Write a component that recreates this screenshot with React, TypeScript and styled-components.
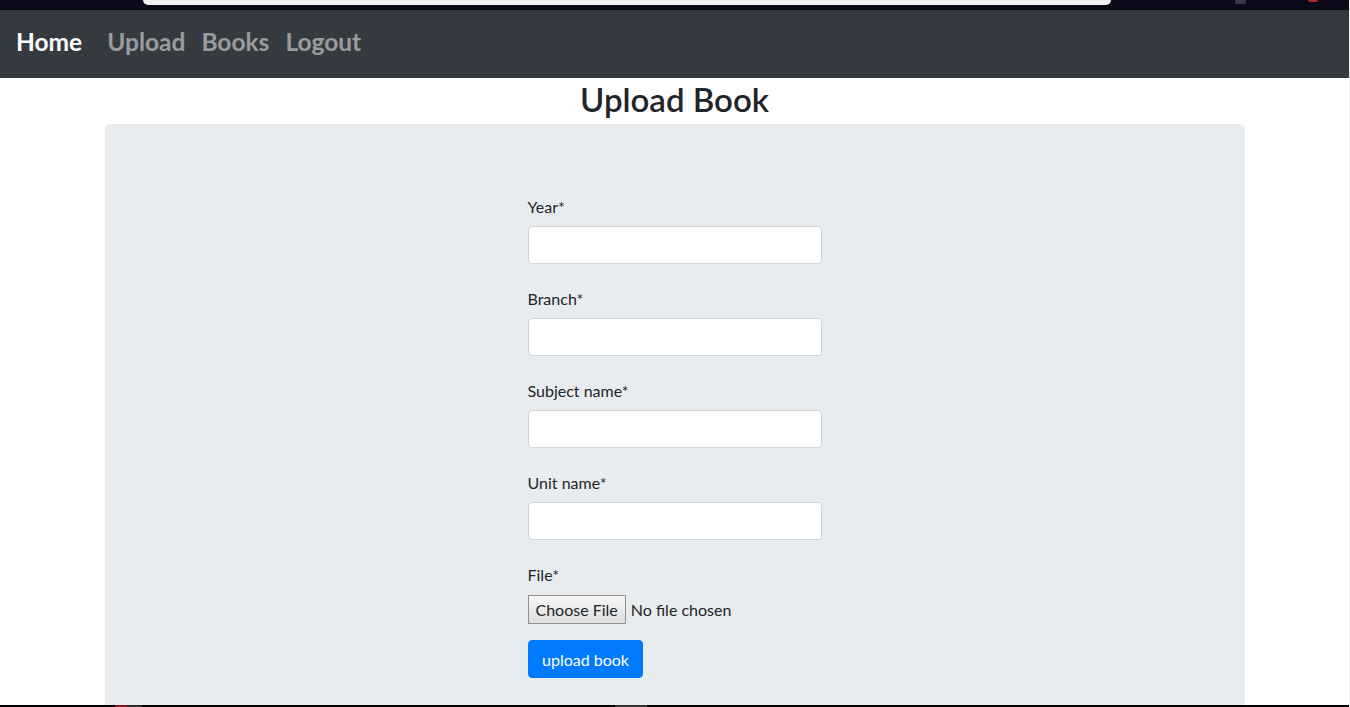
import React from "react";
import styled, { createGlobalStyle } from "styled-components";

const Global = createGlobalStyle`
  html, body { margin: 0; padding: 0; background: #fff; }
  body {
    font-family: "Segoe UI", Lato, "Open Sans", sans-serif;
    color: #212529;
    overflow: hidden;
  }
  * { box-sizing: border-box; }
`;

const Page = styled.div`
  width: 1350px;
  height: 707px;
  display: flex;
  flex-direction: column;
  border-right: 1px solid #ececec;
  overflow: hidden;
`;

const ChromeStrip = styled.div`
  height: 10px;
  flex: none;
  background: #0b0a1a;
  display: flex;
  align-items: flex-start;
`;

const AddressBar = styled.div`
  margin-left: 143px;
  width: 968px;
  height: 5px;
  background: #f1f2f4;
  border-radius: 0 0 9px 9px;
`;

const ChromeDot = styled.span<{ $color: string; $ml: number; $w: number; $h: number }>`
  margin-left: ${(p) => p.$ml}px;
  width: ${(p) => p.$w}px;
  height: ${(p) => p.$h}px;
  background: ${(p) => p.$color};
  border-radius: 0 0 2px 2px;
`;

const Navbar = styled.nav`
  height: 68px;
  flex: none;
  background: #343a40;
  display: flex;
  align-items: center;
  padding: 0 16px 6px;
`;

const Brand = styled.a`
  font-size: 24.5px;
  font-weight: 700;
  color: #fff;
  text-decoration: none;
  margin-right: 17px;
`;

const NavLink = styled.a`
  font-size: 24.5px;
  font-weight: 700;
  color: rgba(255, 255, 255, 0.5);
  text-decoration: none;
  padding: 0 8px;
`;

const Main = styled.main`
  flex: 1;
  display: flex;
  flex-direction: column;
  align-items: center;
`;

const Title = styled.h2`
  margin: 0;
  height: 46px;
  font-size: 33px;
  font-weight: 600;
  line-height: 43px;
  color: #212529;
`;

const Jumbotron = styled.section`
  width: 1140px;
  flex: 1;
  background: #e9ecef;
  border-radius: 5px 5px 0 0;
  display: flex;
  justify-content: center;
  padding-top: 70px;
`;

const Form = styled.form`
  width: 294px;
  display: flex;
  flex-direction: column;
`;

const Group = styled.div`
  display: flex;
  flex-direction: column;
  margin-bottom: 22px;
`;

const Label = styled.label`
  font-size: 16px;
  line-height: 24px;
  padding-top: 1px;
  margin-bottom: 7px;
`;

const Input = styled.input`
  height: 38px;
  width: 100%;
  border: 1px solid #ced4da;
  border-radius: 4px;
  background: #fff;
  padding: 6px 12px;
  font: inherit;
  font-size: 16px;
`;

const FileRow = styled.div`
  display: flex;
  align-items: center;
  height: 30px;
  gap: 5px;
  margin-bottom: 16px;
`;

const FileButton = styled.button`
  height: 29px;
  padding: 0 7px;
  font-family: inherit;
  font-size: 16px;
  color: #212529;
  border: 1px solid #8f8f8f;
  border-radius: 0;
  background: linear-gradient(#f6f6f6, #dedede);
`;

const FileText = styled.span`
  font-size: 16px;
`;

const Submit = styled.button`
  align-self: flex-start;
  height: 38px;
  padding: 0 13.5px;
  font-family: inherit;
  font-size: 16px;
  color: #fff;
  background: #007bff;
  border: 1px solid #007bff;
  border-radius: 4px;
`;

const BottomStrip = styled.div`
  height: 2px;
  flex: none;
  background: #000;
  display: flex;
`;

const BottomBit = styled.span<{ $color: string; $ml: number; $w: number }>`
  margin-left: ${(p) => p.$ml}px;
  width: ${(p) => p.$w}px;
  background: ${(p) => p.$color};
`;

const fields = ["Year*", "Branch*", "Subject name*", "Unit name*"];

export default function App() {
  return (
    <>
      <Global />
      <Page>
        <ChromeStrip>
          <AddressBar />
          <ChromeDot $color="#3a3a44" $ml={124} $w={11} $h={4} />
          <ChromeDot $color="#b0282a" $ml={62} $w={10} $h={2} />
        </ChromeStrip>
        <Navbar>
          <Brand href="#">Home</Brand>
          <NavLink href="#">Upload</NavLink>
          <NavLink href="#">Books</NavLink>
          <NavLink href="#">Logout</NavLink>
        </Navbar>
        <Main>
          <Title>Upload Book</Title>
          <Jumbotron>
            <Form onSubmit={(e) => e.preventDefault()}>
              {fields.map((f) => (
                <Group key={f}>
                  <Label>{f}</Label>
                  <Input type="text" />
                </Group>
              ))}
              <Label>File*</Label>
              <FileRow>
                <FileButton type="button">Choose File</FileButton>
                <FileText>No file chosen</FileText>
              </FileRow>
              <Submit type="submit">upload book</Submit>
            </Form>
          </Jumbotron>
        </Main>
        <BottomStrip>
          <BottomBit $color="#8b1418" $ml={115} $w={12} />
          <BottomBit $color="#2a2a2a" $ml={0} $w={15} />
          <BottomBit $color="#333" $ml={473} $w={32} />
        </BottomStrip>
      </Page>
    </>
  );
}
